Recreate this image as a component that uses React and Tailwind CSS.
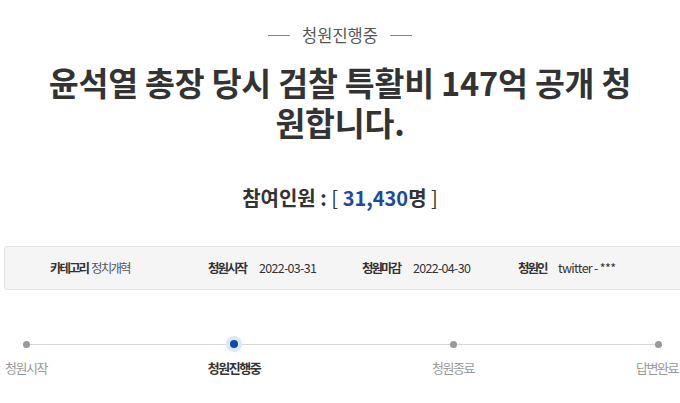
export default function App() {
  const font = { fontFamily: '"Noto Sans CJK KR", "Noto Sans", sans-serif' };
  const steps = [
    { label: "청원시작", active: false },
    { label: "청원진행중", active: true },
    { label: "청원종료", active: false },
    { label: "답변완료", active: false },
  ];
  const info = [
    { k: "카테고리", v: "정치개혁", w: "w-[158px]", lw: "w-[41px]", vc: "text-[#555] tracking-[-1.8px]" },
    { k: "청원시작", v: "2022-03-31", w: "w-[154px]", lw: "w-[51px]", vc: "tracking-[-0.7px]" },
    { k: "청원마감", v: "2022-04-30", w: "w-[156px]", lw: "w-[51px]", vc: "tracking-[-0.7px]" },
    { k: "청원인", v: "twitter - ***", w: "w-[120px]", lw: "w-[40px]", vc: "tracking-[-0.7px]" },
  ];
  return (
    <div className="w-[680px] h-[403px] overflow-hidden bg-white" style={font}>
      <div className="pt-[23px] flex items-center justify-center gap-[12px]">
        <span className="block w-[22px] h-px bg-[#888]" />
        <span className="text-[16.5px] leading-[24px] text-[#555]">청원진행중</span>
        <span className="block w-[22px] h-px bg-[#888]" />
      </div>
      <h1 className="mt-[15px] px-[40px] text-center text-[32.5px] leading-[40px] font-bold text-[#333] tracking-[-0.2px]">
        윤석열 총장 당시 검찰 특활비 147억 공개 청원합니다.
      </h1>
      <div className="mt-[42px] text-center text-[20px] leading-[28px] font-bold text-[#333]">
        참여인원 : <span className="font-normal">[</span> <span className="text-[#1c4a9c]">31,430</span>명 <span className="font-normal">]</span>
      </div>
      <div className="mt-[34px] ml-[4px] w-[690px] h-[44px] bg-[#f5f5f5] border border-[#e2e2e2] rounded-[3px] flex items-center pl-[45px] text-[12.5px] text-[#333]">
        {info.map((it) => (
          <div key={it.k} className={it.w + " flex items-center whitespace-nowrap"}>
            <span className={it.lw + " shrink-0 font-bold text-[12.5px] tracking-[-2px]"}>{it.k}</span>
            <span className={it.vc}>{it.v}</span>
          </div>
        ))}
      </div>
      <div className="relative mt-[46px] ml-[-14px] w-[720px]">
        <div className="absolute left-[40px] w-[632px] top-[8px] h-px bg-[#d8d8d8]" />
        <div className="relative flex gap-[128px]">
          {steps.map((s, i) => (
            <div
              key={s.label}
              className={
                "w-[80px] flex flex-col items-center " +
                (i === 2 ? "ml-[11px] " : "") +
                (i === 3 ? "ml-[-3px] " : "")
              }
            >
              <div className="h-[16px] flex items-center justify-center">
                {s.active ? (
                  <span className="flex items-center justify-center w-[16px] h-[16px] rounded-full bg-[#dbe8fa]">
                    <span className="block w-[8px] h-[8px] rounded-full bg-[#0b4ea8]" />
                  </span>
                ) : (
                  <span className="block w-[7px] h-[7px] rounded-full bg-[#999]" />
                )}
              </div>
              <div
                className={
                  "mt-[6px] text-[13px] leading-[20px] whitespace-nowrap tracking-[-1.5px] " +
                  (s.active ? "font-bold text-[#333]" : "text-[#999]") +
                  (i === 3 ? " pr-[2px]" : "")
                }
              >
                {s.label}
              </div>
            </div>
          ))}
        </div>
      </div>
    </div>
  );
}
